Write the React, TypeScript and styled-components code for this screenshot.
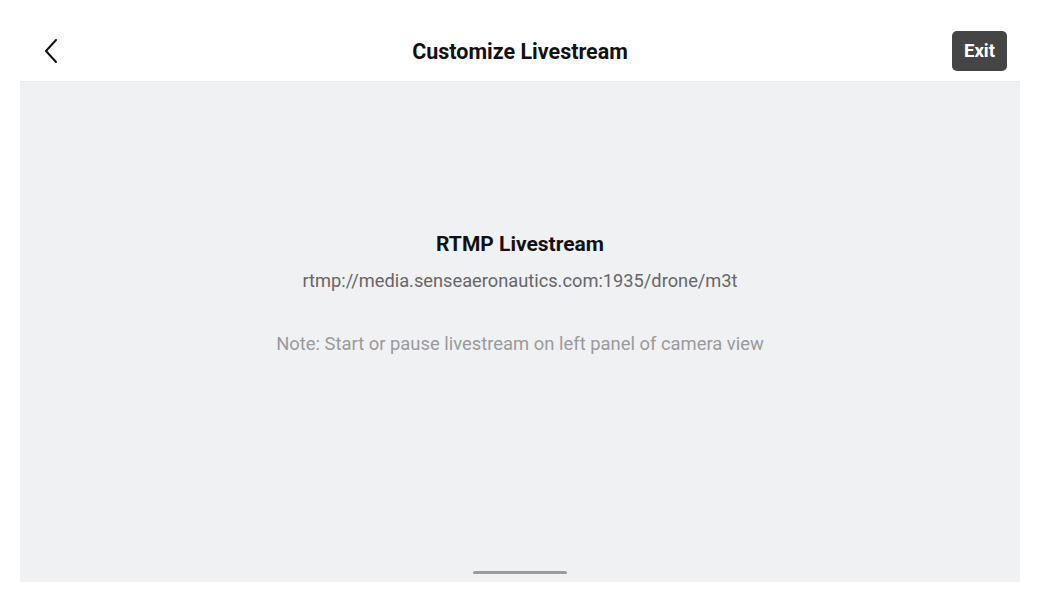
import React from "react";
import styled, { createGlobalStyle } from "styled-components";

const Global = createGlobalStyle`
  html, body { margin: 0; padding: 0; background: #ffffff; }
  body { font-family: Roboto, "Noto Sans", "Liberation Sans", sans-serif; }
  * { box-sizing: border-box; }
`;

const Page = styled.div`
  width: 1040px;
  height: 602px;
  display: flex;
  flex-direction: column;
  background: #ffffff;
`;

const Header = styled.header`
  height: 81px;
  display: grid;
  grid-template-columns: 1fr auto 1fr;
  align-items: center;
  padding: 21px 33px 0 33px;
`;

const BackButton = styled.button`
  justify-self: start;
  margin-left: 8px;
  width: 24px;
  height: 30px;
  padding: 0;
  border: none;
  background: none;
  display: flex;
  align-items: center;
  justify-content: center;
  cursor: pointer;
`;

const Title = styled.h1`
  margin: 2px 0 0;
  font-size: 21.5px;
  line-height: 30px;
  font-weight: 700;
  color: #111111;
`;

const ExitButton = styled.button`
  justify-self: end;
  width: 55px;
  height: 40px;
  border: none;
  border-radius: 5px;
  background: #454545;
  color: #ffffff;
  font-family: Roboto, "Liberation Sans", sans-serif;
  font-size: 18.5px;
  font-weight: 700;
  padding: 0;
  cursor: pointer;
`;

const Panel = styled.main`
  margin: 0 20px;
  height: 501px;
  background: #f0f1f3;
  border-top: 1px solid #e8e9eb;
  display: flex;
  flex-direction: column;
  align-items: center;
`;

const Content = styled.div`
  margin-top: 149px;
  display: flex;
  flex-direction: column;
  align-items: center;
  flex: 1;
`;

const Heading = styled.h2`
  margin: 0;
  font-size: 21px;
  line-height: 26px;
  font-weight: 700;
  color: #111111;
`;

const Url = styled.p`
  margin: 12px 0 0;
  font-size: 18.25px;
  line-height: 24px;
  color: #666666;
`;

const Note = styled.p`
  margin: 39px 0 0;
  font-size: 18.4px;
  line-height: 24px;
  color: #9a9a9a;
`;

const HomeIndicator = styled.div`
  width: 94px;
  height: 3px;
  border-radius: 2px;
  background: #9b9b9b;
  margin-bottom: 8px;
`;

export default function App() {
  return (
    <>
      <Global />
      <Page>
        <Header>
          <BackButton aria-label="Back">
            <svg width="16" height="26" viewBox="0 0 16 26" fill="none">
              <path d="M11 2 L1 13 L11 24" stroke="#111" strokeWidth="2" strokeLinecap="round" strokeLinejoin="round" />
            </svg>
          </BackButton>
          <Title>Customize Livestream</Title>
          <ExitButton>Exit</ExitButton>
        </Header>
        <Panel>
          <Content>
            <Heading>RTMP Livestream</Heading>
            <Url>rtmp://media.senseaeronautics.com:1935/drone/m3t</Url>
            <Note>Note: Start or pause livestream on left panel of camera view</Note>
          </Content>
          <HomeIndicator />
        </Panel>
      </Page>
    </>
  );
}
